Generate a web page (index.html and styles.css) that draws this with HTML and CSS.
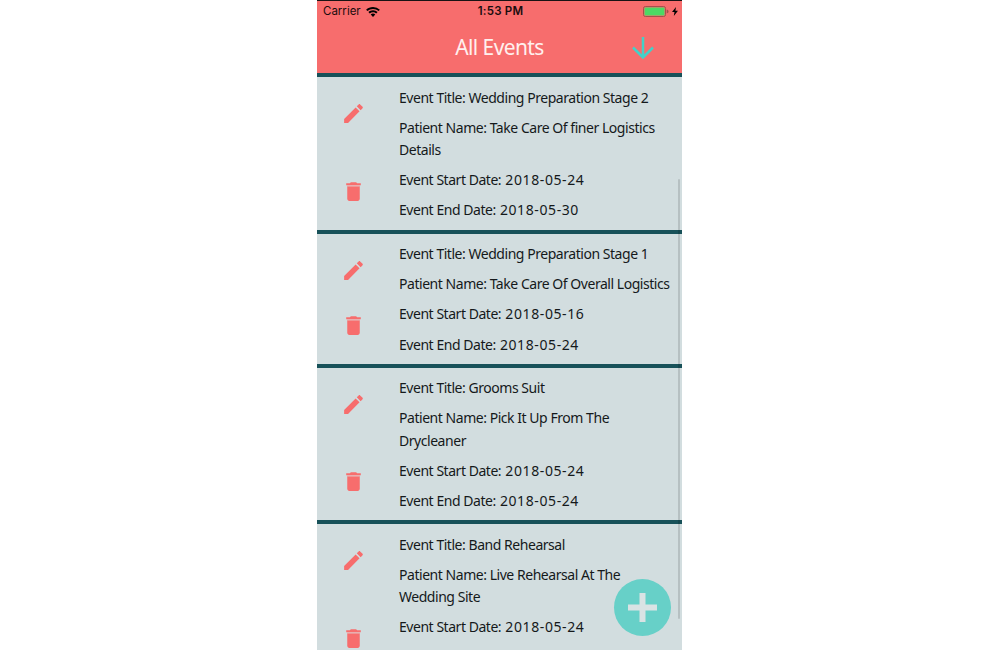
FILE: index.html
```html
<!DOCTYPE html>
<html lang="en">
<head>
<meta charset="utf-8">
<title>All Events</title>
<link rel="stylesheet" href="styles.css">
</head>
<body>
<svg class="defs" aria-hidden="true">
  <symbol id="pencil" viewBox="0 0 24 24"><path d="M3 17.25V21h3.75L17.81 9.94l-3.75-3.75L3 17.25zM20.71 7.04c.39-.39.39-1.02 0-1.41l-2.34-2.34c-.39-.39-1.02-.39-1.41 0l-1.83 1.83 3.75 3.75 1.83-1.83z"/></symbol>
  <symbol id="trash" viewBox="0 0 24 24"><path d="M6 19c0 1.1.9 2 2 2h8c1.1 0 2-.9 2-2V7H6v12zM19 4h-3.5l-1-1h-5l-1 1H5v2h14V4z"/><path class="lid-shade" d="M6 6h12v1.1H6z"/></symbol>
</svg>
<div class="phone">
  <header class="header">
    <div class="status">
      <div class="carrier"><span>Carrier</span><svg class="wifi" viewBox="0 0 14 10"><path d="M7 0C4.300 0 1.900 1 .1 2.700l1.300 1.400A8.200 8.200 0 0 1 7 1.900c2.200 0 4.100.8 5.600 2.200l1.300-1.400A10.100 10.100 0 0 0 7 0zM7 3.300c-1.800 0-3.400.7-4.600 1.800l1.400 1.500A4.700 4.700 0 0 1 7 5.300c1.200 0 2.300.5 3.200 1.300l1.400-1.500A6.700 6.700 0 0 0 7 3.300zM7 6.500c-.9 0-1.700.4-2.300.9L7 9.900l2.300-2.500A3.400 3.400 0 0 0 7 6.500z"/></svg></div>
      <div class="clock">1:53 PM</div>
      <div class="power"><svg class="battery" viewBox="0 0 26 11"><rect class="battery-case" x=".5" y=".5" width="22" height="10" rx="1.800"/><rect class="battery-fill" x="1.500" y="1.500" width="20" height="8" rx=".8"/><path class="battery-tip" d="M23.700 3.600c1.300.3 1.800 1 1.800 1.900s-.5 1.600-1.800 1.900z"/></svg><svg class="bolt" viewBox="0 0 6 9"><path d="M4 0 0 5h2.500L1.800 9 6 3.700H3.400z"/></svg></div>
    </div>
    <div class="titlebar">
      <h1 class="title">All Events</h1>
      <svg class="arrow" viewBox="0 0 24 24"><path d="M12 1v20M2 11.500l10 10 10-10"/></svg>
    </div>
  </header>
  <main class="list">
    <article class="event">
      <div class="actions"><svg class="icon"><use href="#pencil"/></svg><svg class="icon"><use href="#trash"/></svg></div>
      <div class="details">
        <p>Event Title: Wedding Preparation Stage 2</p>
        <p>Patient Name: Take Care Of finer Logistics<br>Details</p>
        <p>Event Start Date: <span class="date">2018-05-24</span></p>
        <p>Event End Date: <span class="date">2018-05-30</span></p>
      </div>
    </article>
    <article class="event">
      <div class="actions"><svg class="icon"><use href="#pencil"/></svg><svg class="icon"><use href="#trash"/></svg></div>
      <div class="details">
        <p>Event Title: Wedding Preparation Stage 1</p>
        <p>Patient Name: Take Care Of Overall Logistics</p>
        <p>Event Start Date: <span class="date">2018-05-16</span></p>
        <p>Event End Date: <span class="date">2018-05-24</span></p>
      </div>
    </article>
    <article class="event">
      <div class="actions"><svg class="icon"><use href="#pencil"/></svg><svg class="icon"><use href="#trash"/></svg></div>
      <div class="details">
        <p>Event Title: Grooms Suit</p>
        <p>Patient Name: Pick It Up From The<br>Drycleaner</p>
        <p>Event Start Date: <span class="date">2018-05-24</span></p>
        <p>Event End Date: <span class="date">2018-05-24</span></p>
      </div>
    </article>
    <article class="event event-last">
      <div class="actions"><svg class="icon"><use href="#pencil"/></svg><svg class="icon"><use href="#trash"/></svg></div>
      <div class="details">
        <p>Event Title: Band Rehearsal</p>
        <p>Patient Name: Live Rehearsal At The<br>Wedding Site</p>
        <p>Event Start Date: <span class="date">2018-05-24</span></p>
      </div>
    </article>
  </main>
  <div class="scrollbar"></div>
  <button class="add" aria-label="Add event"><svg viewBox="0 0 57 57"><path d="M28.500 14v29M14 28.500h29"/></svg></button>
</div>
</body>
</html>
```
FILE: styles.css
```css
* { box-sizing: border-box; }
body { margin: 0; background: #fff; }
.defs { position: absolute; width: 0; height: 0; }
.phone {
  position: relative;
  width: 365px;
  height: 650px;
  margin-left: 317px;
  overflow: hidden;
  background: #d2dddf;
  color: #15191b;
  font-family: "Noto Sans", sans-serif;
}
.header { height: 73.200px; background: #f76d6d; border-top: 1px solid #191314; }
.status {
  display: grid;
  grid-template-columns: 1fr auto 1fr;
  align-items: center;
  height: 21px;
  padding: 0 4px 0 6px;
  color: #1a0c0d;
  font: 11.500px/21px Inter, sans-serif;
}
.carrier { display: flex; align-items: center; gap: 5px; }
.wifi { width: 14px; height: 10px; }
.clock { font-weight: 600; letter-spacing: .2px; }
.power { display: flex; align-items: center; justify-content: flex-end; gap: 3px; }
.battery { width: 26px; height: 11px; }
.battery-case { fill: none; stroke: #a4504c; }
.battery-fill { fill: #4cd964; }
.battery-tip { fill: #a4504c; }
.bolt { width: 6px; height: 9px; }
.titlebar {
  display: grid;
  grid-template-columns: 78px 1fr 78px;
  align-items: center;
  justify-items: center;
  height: 51px;
}
.title { grid-column: 2; margin: 0; padding-bottom: 1px; color: #fff0ee; font-size: 21px; font-weight: 400; line-height: 30px; letter-spacing: -.6px; }
.arrow { width: 24px; height: 24px; fill: none; stroke: #43d1c8; stroke-width: 2.500; }
.event { display: flex; border-top: 4px solid #175159; }
.event-last { height: 156.500px; }
.actions {
  display: flex;
  flex: 0 0 73px;
  flex-direction: column;
  align-items: center;
  justify-content: space-between;
  padding: 24.200px 0 26px;
}
.icon { display: block; width: 25px; height: 25px; fill: #f76d6d; }
.lid-shade { fill: #ecaaaa; }
.details {
  display: flex;
  flex-direction: column;
  gap: 7.750px;
  padding: 9.400px 0 7.800px 9px;
  font-size: 14px;
  line-height: 22.400px;
  letter-spacing: -.46px;
  white-space: nowrap;
}
.details p { margin: 0; }
.date { margin-left: 1px; letter-spacing: .6px; }
.scrollbar { position: absolute; left: 361px; top: 179px; width: 2px; height: 440px; border-radius: 1px; background: rgba(0, 0, 0, .13); }
.add { position: absolute; left: 297px; top: 578.500px; width: 57px; height: 57px; padding: 0; border: 0; border-radius: 50%; background: #67d0c8; }
.add svg { display: block; width: 57px; height: 57px; fill: none; stroke: #d9e3e4; stroke-width: 6; }
```
